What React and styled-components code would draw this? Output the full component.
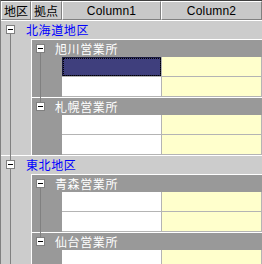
import React from "react";
import styled, { createGlobalStyle } from "styled-components";

const LINE = "#808080";
const LIGHT = "#cccccc";
const DARK = "#999999";
const CELL_BORDER = "#b4b4b4";

const GlobalStyle = createGlobalStyle`
  html, body { margin: 0; padding: 0; background: ${LIGHT}; }
  body { width: 262px; height: 264px; overflow: hidden; }
`;

const Grid = styled.div`
  width: 262px;
  height: 264px;
  box-sizing: border-box;
  overflow: hidden;
  display: flex;
  flex-direction: column;
  background: ${LIGHT};
  border-top: 1px solid #404040;
  border-left: 1px solid ${LINE};
  font-family: "Noto Sans CJK JP", "Liberation Sans", sans-serif;
  font-size: 12px;
`;

const HeaderRow = styled.div`
  display: flex;
  flex: none;
  height: 19px;
`;

const HeaderCell = styled.div`
  box-sizing: border-box;
  width: ${(p) => (p.$w ? `${p.$w}px` : "auto")};
  flex: ${(p) => (p.$w ? "none" : "1")};
  background: #c8c8c8;
  border-top: 1px solid #fff;
  border-left: 1px solid #fff;
  border-right: 1px solid ${LINE};
  border-bottom: 1px solid ${LINE};
  display: flex;
  align-items: center;
  justify-content: ${(p) => (p.$center ? "center" : "flex-start")};
  padding-left: ${(p) => (p.$center ? 0 : 2)}px;
  font-family: ${(p) =>
    p.$latin
      ? '"Liberation Sans", Arial, sans-serif'
      : '"Noto Sans CJK JP", sans-serif'};
  font-size: 12px;
  line-height: 1;
  letter-spacing: ${(p) => (p.$latin ? "0.2px" : "0")};
  color: #000;
  white-space: nowrap;
`;

const GroupRow = styled.div`
  display: flex;
  align-items: stretch;
  flex: none;
  height: ${(p) => p.$h}px;
  background: linear-gradient(#fff 0 1px, ${(p) => p.$bg} 1px);
  color: ${(p) => p.$color};
`;

const TreeSlot = styled.div`
  width: ${(p) => p.$w}px;
  flex: none;
  display: flex;
  flex-direction: column;
  align-items: center;
`;

const Stem = styled.div`
  flex: 1;
  width: 1px;
  background: ${(p) => (p.$on ? LINE : "transparent")};
`;

const Expander = styled.div`
  box-sizing: border-box;
  width: 9px;
  height: 9px;
  flex: none;
  border: 1px solid ${LINE};
  background: #fff;
  display: flex;
  align-items: center;
  justify-content: center;
  &::after {
    content: "";
    width: 5px;
    height: 1px;
    background: #000;
  }
`;

const Label = styled.span`
  display: flex;
  align-items: center;
  padding-left: ${(p) => p.$pad}px;
  padding-top: 1px;
  font-size: 12px;
  line-height: 1;
  letter-spacing: 0.6px;
  white-space: nowrap;
`;

const Branch = styled.div`
  display: flex;
  flex: none;
`;

const Indent = styled.div`
  width: ${(p) => p.$w}px;
  flex: none;
  background-color: ${(p) => p.$bg};
  background-image: ${(p) =>
    p.$line ? `linear-gradient(${LINE}, ${LINE})` : "none"};
  background-repeat: no-repeat;
  background-size: 1px 100%;
  background-position: ${(p) => p.$lineX}px 0;
`;

const OfficeList = styled.div`
  flex: 1;
  display: flex;
  flex-direction: column;
  border-left: 1px solid #fff;
`;

const DataRows = styled.div`
  flex: 1;
  display: flex;
  flex-direction: column;
`;

const DataRow = styled.div`
  display: flex;
  flex: none;
  height: 20px;
`;

const Cell = styled.div`
  box-sizing: border-box;
  width: ${(p) => (p.$w ? `${p.$w}px` : "auto")};
  flex: ${(p) => (p.$w ? "none" : "1")};
  background: ${(p) => (p.$selected ? "#3f3f7d" : p.$bg)};
  border-right: 1px solid ${CELL_BORDER};
  border-bottom: 1px solid ${CELL_BORDER};
  outline: ${(p) => (p.$selected ? "1px dotted #000" : "none")};
  outline-offset: -2px;
  box-shadow: ${(p) => (p.$selected ? "inset 0 0 0 1px #1c1c40" : "none")};
`;

const data = [
  {
    region: "北海道地区",
    offices: [
      { name: "旭川営業所", rows: 2, selected: 0 },
      { name: "札幌営業所", rows: 2 },
    ],
  },
  {
    region: "東北地区",
    offices: [
      { name: "青森営業所", rows: 2 },
      { name: "仙台営業所", rows: 2 },
    ],
  },
];

function Office({ office, last, first }) {
  return (
    <>
      <GroupRow $h={18} $bg={DARK} $color="#fff">
        <TreeSlot $w={17}>
          <Stem $on={!first} />
          <Expander />
          <Stem $on={!last} />
        </TreeSlot>
        <Label $pad={6}>{office.name}</Label>
      </GroupRow>
      <Branch>
        <Indent $w={30} $bg={DARK} $line={!last} $lineX={8} />
        <DataRows>
          {Array.from({ length: office.rows }).map((_, i) => (
            <DataRow key={i}>
              <Cell $w={100} $bg="#ffffff" $selected={office.selected === i} />
              <Cell $bg="#ffffcc" />
            </DataRow>
          ))}
        </DataRows>
      </Branch>
    </>
  );
}

function Region({ group, index }) {
  return (
    <>
      <GroupRow $h={19} $bg={LIGHT} $color="#0000ff">
        <TreeSlot $w={19}>
          <Stem $on={index > 0} />
          <Expander />
          <Stem $on />
        </TreeSlot>
        <Label $pad={6}>{group.region}</Label>
      </GroupRow>
      <Branch>
        <Indent $w={30} $bg={LIGHT} $line $lineX={9} />
        <OfficeList>
          {group.offices.map((o, i) => (
            <Office
              key={o.name}
              office={o}
              first={i === 0}
              last={i === group.offices.length - 1}
            />
          ))}
        </OfficeList>
      </Branch>
    </>
  );
}

export default function App() {
  return (
    <>
      <GlobalStyle />
      <Grid>
        <HeaderRow>
          <HeaderCell $w={30}>地区</HeaderCell>
          <HeaderCell $w={31}>拠点</HeaderCell>
          <HeaderCell $w={99} $center $latin>
            Column1
          </HeaderCell>
          <HeaderCell $center $latin>
            Column2
          </HeaderCell>
        </HeaderRow>
        {data.map((g, i) => (
          <Region key={g.region} group={g} index={i} />
        ))}
      </Grid>
    </>
  );
}
